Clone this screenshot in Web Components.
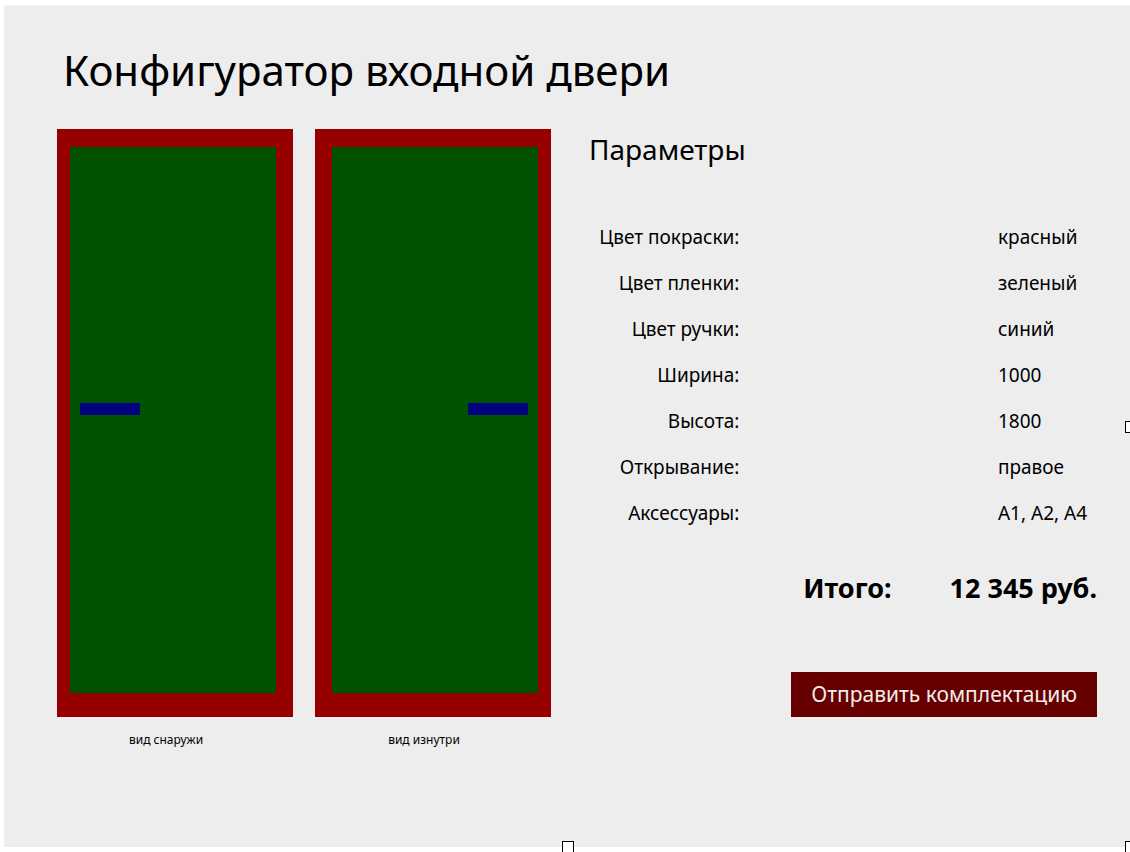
<!DOCTYPE html>
<html lang="ru">
<head>
<meta charset="utf-8">
<meta name="viewport" content="width=device-width, initial-scale=1">
<title>Конфигуратор входной двери</title>
<style>
  body { margin: 0; background: #fff; color: #000; font-family: "Noto Sans", "Open Sans", sans-serif; }
</style>
</head>
<body>
<door-configurator></door-configurator>

<template id="configurator-template">
  <style>
    :host { display: grid; box-sizing: border-box; min-height: 100vh; padding: 5px 0 5px 4px; overflow: clip; }
    .sheet { position: relative; box-sizing: border-box; padding: 36px 33px 36px 53px; background: #ededed; border-top: 1px solid #f4f4f4; }
    h1 { margin: 0 0 31px; padding-left: 6px; font-size: 42px; line-height: 56px; font-weight: 400; }
    main { display: grid; grid-template-columns: 494fr 508fr; gap: 38px; align-items: start; }
    .views { display: grid; grid-template-columns: 1fr 1fr; gap: 22px; }
    .params { display: grid; }
    h2 { margin: 0 0 45px; font-size: 28px; line-height: 40px; font-weight: 400; }
    .handle { position: absolute; }
    .right { left: 100%; top: 50%; }
    .bottom { left: 50%; top: 100%; }
    .corner { left: 100%; top: 100%; }
  </style>
  <div class="sheet">
    <h1>Конфигуратор входной двери</h1>
    <main>
      <div class="views">
        <door-view side="outside">вид снаружи</door-view>
        <door-view side="inside">вид изнутри</door-view>
      </div>
      <section class="params" aria-labelledby="params-title">
        <h2 id="params-title">Параметры</h2>
        <param-table></param-table>
        <order-total><span slot="label">Итого:</span>12 345 руб.</order-total>
        <submit-button>Отправить комплектацию</submit-button>
      </section>
    </main>
    <resize-handle class="handle right"></resize-handle>
    <resize-handle class="handle bottom"></resize-handle>
    <resize-handle class="handle corner"></resize-handle>
  </div>
</template>

<template id="door-template">
  <style>
    :host { display: block; }
    figure { margin: 0; }
    .frame { box-sizing: border-box; display: grid; aspect-ratio: 236 / 588; padding: 18px 17px 24px 13px; background: #960000; }
    .leaf { display: grid; grid-template-rows: 256fr 12fr 278fr; padding: 0 10px; background: #005200; }
    .grip { grid-row: 2; justify-self: start; width: 60px; background: #000080; }
    :host([side="inside"]) .frame { padding: 18px 13px 24px 17px; }
    :host([side="inside"]) .grip { justify-self: end; }
    figcaption { margin-top: 13px; padding-right: 18px; text-align: center; font-size: 12px; line-height: 20px; }
  </style>
  <figure>
    <div class="frame"><div class="leaf"><div class="grip"></div></div></div>
    <figcaption><slot></slot></figcaption>
  </figure>
</template>

<template id="params-template">
  <style>
    :host { display: block; }
    table { width: 100%; table-layout: fixed; border-collapse: collapse; font-size: 19px; line-height: 24px; }
    th, td { box-sizing: border-box; height: 46px; padding: 0 2px; font-weight: 400; white-space: nowrap; }
    th { width: 30%; text-align: right; }
    td { padding-right: 0; }
    td span { display: block; margin-left: 72%; }
  </style>
  <table><tbody></tbody></table>
</template>

<template id="total-template">
  <style>
    :host { display: flex; justify-content: flex-end; gap: 58px; margin-top: 32px; font-size: 27px; line-height: 40px; font-weight: 700; white-space: nowrap; }
  </style>
  <slot name="label"></slot>
  <span><slot></slot></span>
</template>

<template id="submit-template">
  <style>
    :host { display: flex; justify-content: flex-end; margin-top: 64px; }
    button { margin: 0; padding: 0 20px; border: 0; height: 45px; background: #660000; color: #f4ecec; font: 400 21px/45px "Noto Sans", "Open Sans", sans-serif; white-space: nowrap; cursor: pointer; }
  </style>
  <button type="button"><slot></slot></button>
</template>

<template id="handle-template">
  <style>
    :host { display: block; box-sizing: border-box; width: 12px; height: 12px; margin: -6px -5px; background: #fff; border: 1px solid #000; }
  </style>
</template>

<script>
  const PARAMS = [
    ['Цвет покраски:', 'красный'],
    ['Цвет пленки:', 'зеленый'],
    ['Цвет ручки:', 'синий'],
    ['Ширина:', '1000'],
    ['Высота:', '1800'],
    ['Открывание:', 'правое'],
    ['Аксессуары:', 'А1, А2, А4'],
  ];

  class TemplateElement extends HTMLElement {
    constructor() {
      super();
      const template = document.getElementById(this.constructor.template);
      this.attachShadow({ mode: 'open' }).append(template.content.cloneNode(true));
    }
  }

  class DoorView extends TemplateElement { static template = 'door-template'; }
  class OrderTotal extends TemplateElement { static template = 'total-template'; }
  class SubmitButton extends TemplateElement { static template = 'submit-template'; }
  class ResizeHandle extends TemplateElement { static template = 'handle-template'; }
  class DoorConfigurator extends TemplateElement { static template = 'configurator-template'; }

  class ParamTable extends TemplateElement {
    static template = 'params-template';
    connectedCallback() {
      this.shadowRoot.querySelector('tbody').innerHTML = PARAMS
        .map(([name, value]) => `<tr><th scope="row">${name}</th><td><span>${value}</span></td></tr>`)
        .join('');
    }
  }

  customElements.define('door-view', DoorView);
  customElements.define('param-table', ParamTable);
  customElements.define('order-total', OrderTotal);
  customElements.define('submit-button', SubmitButton);
  customElements.define('resize-handle', ResizeHandle);
  customElements.define('door-configurator', DoorConfigurator);
</script>
</body>
</html>
